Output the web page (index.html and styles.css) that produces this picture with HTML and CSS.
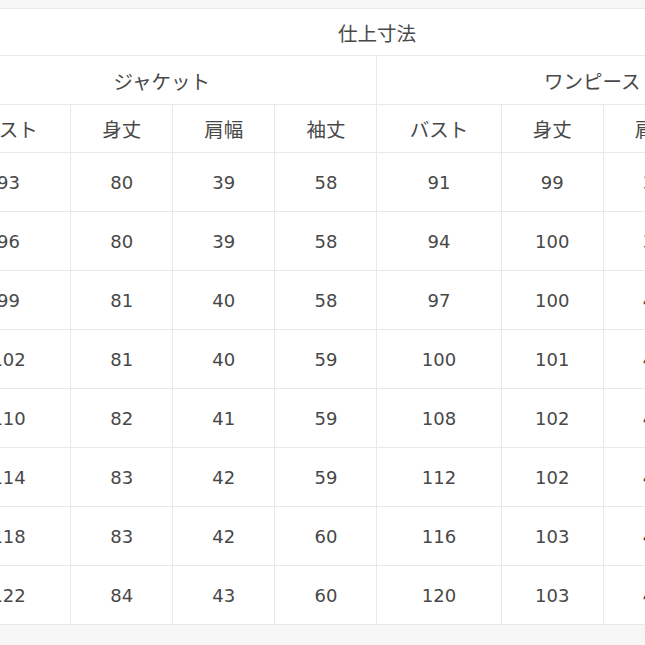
FILE: index.html
```html
<!DOCTYPE html>
<html lang="ja">
<head>
<meta charset="utf-8">
<title>仕上寸法</title>
<link rel="stylesheet" href="styles.css">
</head>
<body>
<div class="frame">
  <table class="size-table">
    <colgroup>
      <col class="c-wide"><col class="c-std"><col class="c-std"><col class="c-std">
      <col class="c-wide"><col class="c-std"><col class="c-std"><col class="c-std">
    </colgroup>
    <thead>
      <tr class="r-title"><th colspan="8">仕上寸法</th></tr>
      <tr class="r-group"><th colspan="4">ジャケット</th><th colspan="4">ワンピース</th></tr>
      <tr class="r-head">
        <th>バスト</th><th>身丈</th><th>肩幅</th><th>袖丈</th>
        <th>バスト</th><th>身丈</th><th>肩幅</th><th>袖丈</th>
      </tr>
    </thead>
    <tbody>
      <tr><td>93</td><td>80</td><td>39</td><td>58</td><td>91</td><td>99</td><td>37</td><td>58</td></tr>
      <tr><td>96</td><td>80</td><td>39</td><td>58</td><td>94</td><td>100</td><td>38</td><td>58</td></tr>
      <tr><td>99</td><td>81</td><td>40</td><td>58</td><td>97</td><td>100</td><td>40</td><td>58</td></tr>
      <tr><td>102</td><td>81</td><td>40</td><td>59</td><td>100</td><td>101</td><td>40</td><td>59</td></tr>
      <tr><td>110</td><td>82</td><td>41</td><td>59</td><td>108</td><td>102</td><td>41</td><td>59</td></tr>
      <tr><td>114</td><td>83</td><td>42</td><td>59</td><td>112</td><td>102</td><td>42</td><td>59</td></tr>
      <tr><td>118</td><td>83</td><td>42</td><td>60</td><td>116</td><td>103</td><td>42</td><td>60</td></tr>
      <tr><td>122</td><td>84</td><td>43</td><td>60</td><td>120</td><td>103</td><td>43</td><td>60</td></tr>
    </tbody>
  </table>
</div>
</body>
</html>
```

FILE: styles.css
```css
html, body {
  margin: 0;
  padding: 0;
  overflow: hidden;
  background: #f6f6f6;
}

.frame {
  width: 645px;
  height: 645px;
  overflow: hidden;
  padding-top: 8px;
  box-sizing: border-box;
}

.size-table {
  margin-left: -54px;
  width: 862px;
  table-layout: fixed;
  border-collapse: collapse;
  background: #ffffff;
  font-family: "DejaVu Sans", "Noto Sans CJK JP", sans-serif;
  font-size: 18px;
  color: #484848;
}

.c-wide { width: 124px; }
.c-std { width: 102px; }

.size-table th,
.size-table td {
  border: 1px solid #e9e9e9;
  text-align: center;
  vertical-align: middle;
  padding: 0;
  font-weight: normal;
}

.size-table th {
  font-family: "Noto Sans CJK JP", sans-serif;
  font-size: 19.5px;
}

.r-title th { height: 46px; }
.r-group th { height: 48px; }
.r-head th { height: 47px; }
.size-table td { height: 58px; }
```
